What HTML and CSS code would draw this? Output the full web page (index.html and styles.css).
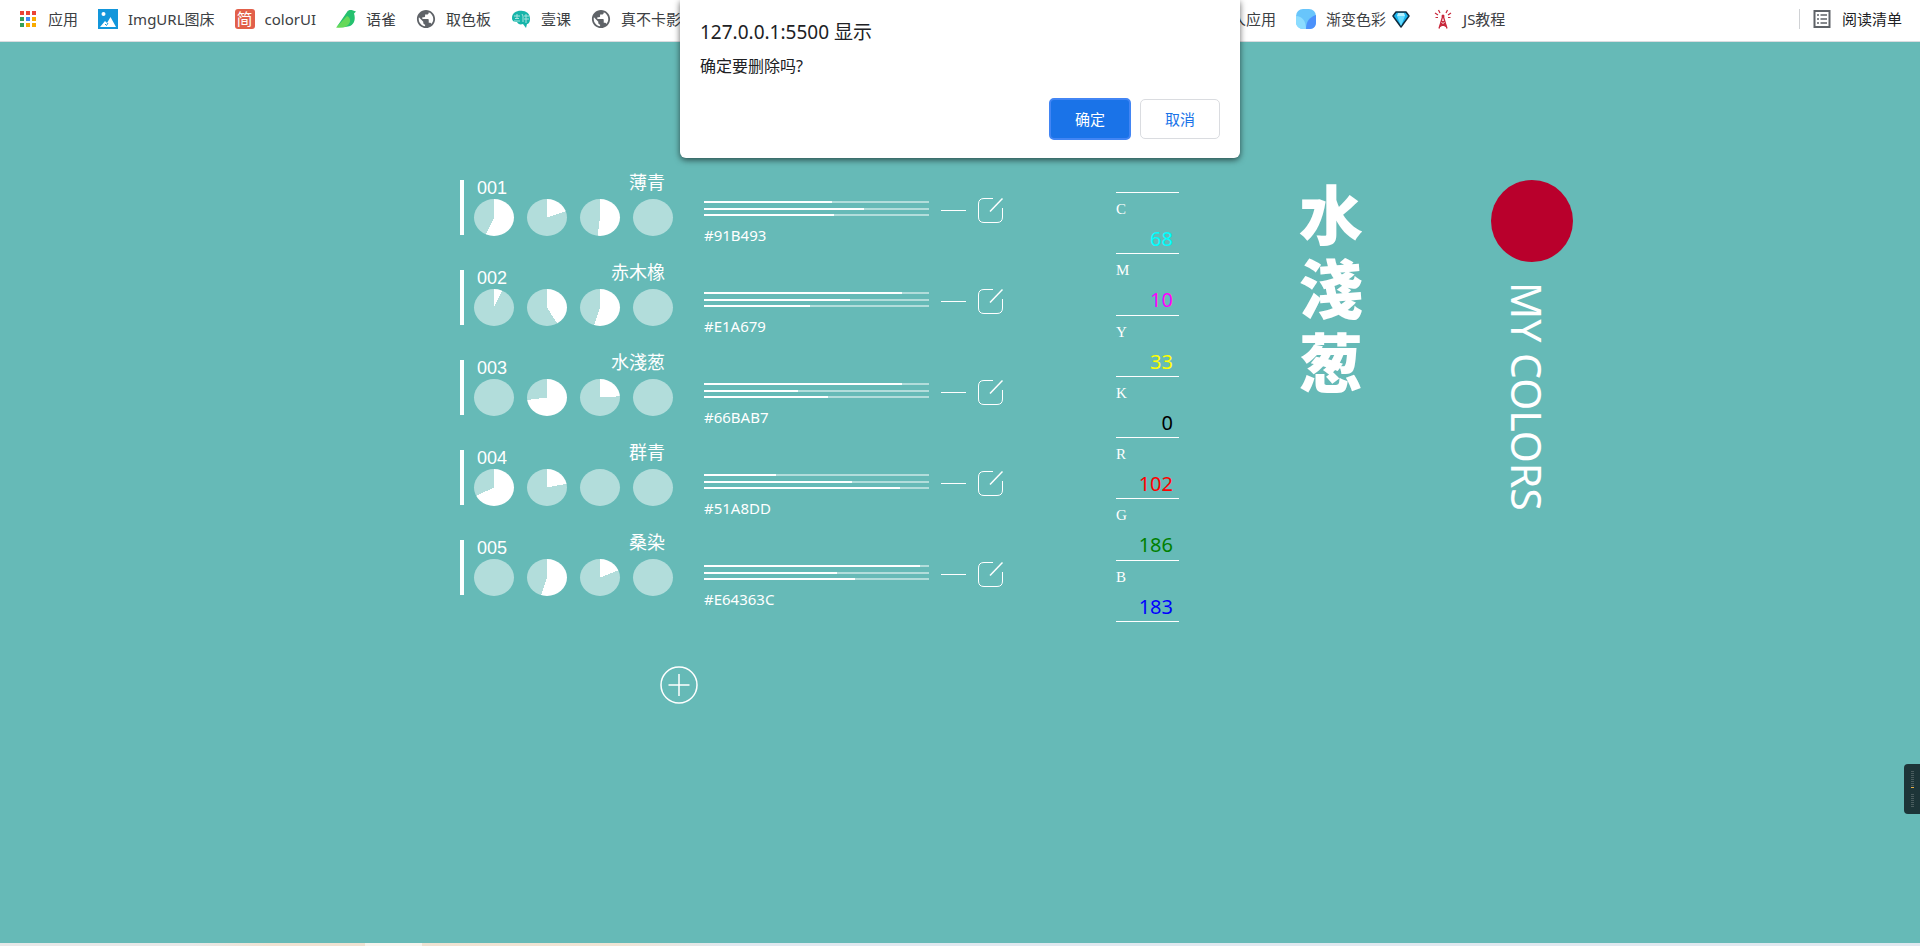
FILE: index.html
```html
<!DOCTYPE html>
<html lang="zh-CN">
<head>
<meta charset="utf-8">
<title>MY COLORS</title>
<link rel="stylesheet" href="styles.css">
</head>
<body>
<svg class="defs" aria-hidden="true">
  <symbol id="edit" viewBox="0 0 25 25"><path d="M15 .5H6Q.5.5.5 6v13Q.5 24.500 6 24.500h13Q24.500 24.500 24.500 19V10" fill="none" stroke="#fff"/><path d="M12 13.500 24.500.5" fill="none" stroke="#fff" stroke-width="1.500"/></symbol>
  <symbol id="globe" viewBox="1 1 22 22"><path d="M12 2C6.480 2 2 6.480 2 12s4.480 10 10 10 10-4.480 10-10S17.520 2 12 2zm-1 17.930c-3.950-.49-7-3.850-7-7.930 0-.62.08-1.210.21-1.790L9 15v1c0 1.100.9 2 2 2v1.930zm6.900-2.540c-.26-.81-1-1.390-1.900-1.390h-1v-3c0-.55-.45-1-1-1H8v-2h2c.55 0 1-.45 1-1V7h2c1.100 0 2-.9 2-2v-.41c2.930 1.190 5 4.060 5 7.410 0 2.080-.8 3.970-2.100 5.390z" fill="#5f6368"/></symbol>
</svg>

<header class="bookmarks">
  <nav class="group main-group">
    <a class="bookmark" href="#"><svg class="icon" viewBox="0 0 20 20"><path d="M2 2h4v4H2zM8 2h4v4H8zM14 2h4v4h-4z" fill="#ea4335"/><path d="M2 8h4v4H2zM2 14h4v4H2z" fill="#34a05a"/><path d="M8 8h4v4H8z" fill="#4285f4"/><path d="M14 8h4v4h-4zM8 14h4v4H8zM14 14h4v4h-4z" fill="#f9ab00"/></svg>应用</a>
    <a class="bookmark" href="#"><svg class="icon" viewBox="0 0 20 20"><path d="M0 0h20v20H0z" fill="#1296db"/><circle cx="5.500" cy="5" r="2" fill="#fff"/><path d="M2 18l5-6 2 2 3.500-6L18 18z" fill="#fff"/><path d="M7 15l1.500 1.500L10 14" fill="none" stroke="#1296db"/></svg>ImgURL图床</a>
    <a class="bookmark" href="#"><span class="jian">简</span>colorUI</a>
    <a class="bookmark" href="#"><svg class="icon" viewBox="0 0 20 20"><path d="M11 3c1-2 4-2.500 6-1.500l3 1-2 2c2 6 0 12-6 13-4 1-8 1-11 0z" fill="#25c16f"/><path d="M0 18.500 11 7c4 2 4 6 1 9-3 3-8 3-12 2.500z" fill="#66d95a"/></svg>语雀</a>
    <a class="bookmark" href="#"><svg class="icon"><use href="#globe"/></svg>取色板</a>
    <a class="bookmark" href="#"><svg class="icon" viewBox="0 0 20 20"><path d="M1 9C1 3 7 1 12 2c5 .5 7 4 7 8s-2 5-3 5l-1 4-3-4c-3 1-5 0-6-2-3 0-5-1-5-4z" fill="#17b5aa"/><path d="M3 7h6M4 9.500h4M3 12h6M6 5v5M11 5l1 2v6M13 7h5M15 5v9M13 10h5" fill="none" stroke="#a8e3de"/></svg>壹课</a>
    <a class="bookmark" href="#"><svg class="icon"><use href="#globe"/></svg>真不卡影视</a>
  </nav>
  <nav class="group">
    <a class="bookmark" href="#">人应用</a>
    <a class="bookmark" href="#"><svg class="icon" viewBox="0 0 20 20"><rect width="20" height="20" rx="7" fill="#68c5fb"/><path d="M0 7c6 0 10 5 10 13H7c-4 0-7-3-7-7z" fill="#8bdcff"/><path d="M20 6C14 8 10 12 10 20h4c4 0 6-3 6-7z" fill="#4b91fb"/></svg>渐变色彩<svg class="gem" viewBox="0 0 18 20"><path d="M4 3h10l3 4-8 11L1 7z" fill="#18b4ee" stroke="#102a3c" stroke-width="1.500" stroke-linejoin="round"/><path d="M5 7h8l-4 10z" fill="#66dcff"/><path d="M6 4h6l1 3H5z" fill="#b5f1ff"/></svg></a>
    <a class="bookmark" href="#"><svg class="icon" viewBox="0 0 20 20"><path d="M9.500 8 6 19.500M10.500 8 14 19.500M8.500 12l3.500 2.500-5 3M11.500 12 8 14.500l5 3" fill="none" stroke="#c8283c" stroke-width="1.300"/><circle cx="10" cy="7" r="1.500" fill="#c8283c"/><path d="M7 4 5.500 1M13 4l1.500-3M5 6 2 4M15 6l3-2M5 8.500H2.500M15 8.500h2.500" stroke="#c8283c" stroke-width="1.200"/></svg>JS教程</a>
  </nav>
  <a class="bookmark reading" href="#"><svg class="icon" viewBox="0 0 20 20"><path d="M2.500 2h15v16h-15z" fill="none" stroke="#5f6368" stroke-width="2"/><path d="M5 6h2M5 10h2M5 14h2M8.500 6H15M8.500 10H15M8.500 14H15" stroke="#5f6368" stroke-width="1.600"/></svg>阅读清单</a>
</header>

<main class="board">
  <section class="swatches">
    <ul class="list">
      <li class="swatch"><div class="body"><div class="head"><span class="num">001</span><span class="name">薄青</span></div><div class="pies"><i class="pie" style="--v:57%"></i><i class="pie" style="--v:20%"></i><i class="pie" style="--v:52%"></i><i class="pie" style="--v:0%"></i></div></div></li>
      <li class="swatch"><div class="body"><div class="head"><span class="num">002</span><span class="name">赤木橡</span></div><div class="pies"><i class="pie" style="--v:7%"></i><i class="pie" style="--v:41%"></i><i class="pie" style="--v:55%"></i><i class="pie" style="--v:0%"></i></div></div></li>
      <li class="swatch"><div class="body"><div class="head"><span class="num">003</span><span class="name">水淺葱</span></div><div class="pies"><i class="pie" style="--v:0%"></i><i class="pie" style="--v:73%"></i><i class="pie" style="--v:24%"></i><i class="pie" style="--v:0%"></i></div></div></li>
      <li class="swatch"><div class="body"><div class="head"><span class="num">004</span><span class="name">群青</span></div><div class="pies"><i class="pie" style="--v:68%"></i><i class="pie" style="--v:22%"></i><i class="pie" style="--v:0%"></i><i class="pie" style="--v:0%"></i></div></div></li>
      <li class="swatch"><div class="body"><div class="head"><span class="num">005</span><span class="name">桑染</span></div><div class="pies"><i class="pie" style="--v:0%"></i><i class="pie" style="--v:55%"></i><i class="pie" style="--v:19%"></i><i class="pie" style="--v:0%"></i></div></div></li>
    </ul>
    <button class="add" type="button" aria-label="添加"><svg viewBox="0 0 38 38"><circle cx="19" cy="19" r="18" fill="none" stroke="#fff" stroke-width="1.500"/><path d="M8.500 19h21M19 8v22" stroke="#fff" stroke-width="1.500"/></svg></button>
  </section>

  <ul class="channels">
    <li class="channel"><div class="bars"><i class="bar" style="--v:57%"></i><i class="bar" style="--v:71%"></i><i class="bar" style="--v:58%"></i></div><i class="dash"></i><button class="edit" type="button" aria-label="编辑"><svg><use href="#edit"/></svg></button><span class="hex">#91B493</span></li>
    <li class="channel"><div class="bars"><i class="bar" style="--v:88%"></i><i class="bar" style="--v:65%"></i><i class="bar" style="--v:47%"></i></div><i class="dash"></i><button class="edit" type="button" aria-label="编辑"><svg><use href="#edit"/></svg></button><span class="hex">#E1A679</span></li>
    <li class="channel"><div class="bars"><i class="bar" style="--v:88%"></i><i class="bar" style="--v:42%"></i><i class="bar" style="--v:55%"></i></div><i class="dash"></i><button class="edit" type="button" aria-label="编辑"><svg><use href="#edit"/></svg></button><span class="hex">#66BAB7</span></li>
    <li class="channel"><div class="bars"><i class="bar" style="--v:32%"></i><i class="bar" style="--v:66%"></i><i class="bar" style="--v:87%"></i></div><i class="dash"></i><button class="edit" type="button" aria-label="编辑"><svg><use href="#edit"/></svg></button><span class="hex">#51A8DD</span></li>
    <li class="channel"><div class="bars"><i class="bar" style="--v:96%"></i><i class="bar" style="--v:59%"></i><i class="bar" style="--v:67%"></i></div><i class="dash"></i><button class="edit" type="button" aria-label="编辑"><svg><use href="#edit"/></svg></button><span class="hex">#E64363C</span></li>
  </ul>

  <dl class="values">
    <div class="value"><dt>C</dt><dd class="c">68</dd></div>
    <div class="value"><dt>M</dt><dd class="m">10</dd></div>
    <div class="value"><dt>Y</dt><dd class="y">33</dd></div>
    <div class="value"><dt>K</dt><dd class="k">0</dd></div>
    <div class="value"><dt>R</dt><dd class="r">102</dd></div>
    <div class="value"><dt>G</dt><dd class="g">186</dd></div>
    <div class="value"><dt>B</dt><dd class="b">183</dd></div>
  </dl>

  <h1 class="title">水淺葱</h1>

  <aside class="brand"><div class="sun"></div><p class="brand-name">MY COLORS</p></aside>
</main>

<footer class="strip"></footer>

<div class="dialog" role="alertdialog" aria-labelledby="dlg-title" aria-describedby="dlg-text">
  <h2 class="dialog-title" id="dlg-title">127.0.0.1:5500 显示</h2>
  <p class="dialog-text" id="dlg-text">确定要删除吗?</p>
  <div class="actions"><button class="btn primary" type="button">确定</button><button class="btn" type="button">取消</button></div>
</div>

<div class="widget"><i class="dots"></i><i class="mark"></i><i class="dots short"></i></div>
</body>
</html>
```

FILE: styles.css
```css
* { box-sizing: border-box; }

body {
  margin: 0;
  min-height: 100vh;
  display: flex;
  flex-direction: column;
  position: relative;
  background: #66bab7;
  color: #fff;
  font-family: "Noto Sans", "Noto Sans CJK SC", sans-serif;
  font-size: 15px;
  line-height: 20px;
}

ul, dl, dd, p, h1, h2 { margin: 0; padding: 0; }
ul { list-style: none; }
button { font: inherit; padding: 0; cursor: pointer; }
.defs { position: absolute; width: 0; height: 0; }

/* Bookmarks bar */
.bookmarks {
  display: flex;
  align-items: center;
  height: 42px;
  padding: 0 18px;
  padding-bottom: 4px;
  background: #fff;
  border-bottom: 1px solid #dadce0;
}
.group { display: flex; gap: 20px; }
.main-group { flex: 0 1 1213px; }
.bookmark {
  display: flex;
  align-items: center;
  gap: 10px;
  color: #3c4043;
  text-decoration: none;
  white-space: nowrap;
}
.icon { width: 20px; height: 20px; flex: none; }
.gem { width: 18px; height: 20px; margin: 0 3px 0 -4px; }
.jian {
  width: 20px;
  height: 20px;
  border-radius: 3px;
  background: #e2604a;
  color: #fff;
  font-size: 16px;
  text-align: center;
}
.reading {
  margin-left: auto;
  padding-left: 12px;
  border-left: 1px solid #d0d2d5;
  color: #202124;
}

/* Board */
.board {
  flex: 1;
  display: grid;
  grid-template-columns: 244px 412px 181px 194px 82px;
  justify-content: center;
  align-items: start;
  padding: 130px 0 40px 113px;
}

.list { display: grid; gap: 26px; width: 213px; }
.swatch { display: flex; align-items: flex-end; gap: 10px; }
.swatch::before {
  content: "";
  width: 4px;
  height: 55px;
  margin-bottom: 1px;
  background: #fff;
}
.body { flex: 1; }
.head {
  display: flex;
  justify-content: space-between;
  height: 27px;
  padding: 0 8px 0 3px;
  font-size: 18px;
}
.num {
  align-self: flex-end;
  font-family: "Liberation Sans", Arial, sans-serif;
  line-height: 22px;
}
.name { font-family: "Noto Sans CJK JP", sans-serif; line-height: 18px; }
.pies { display: flex; justify-content: space-between; }
.pie {
  width: 40px;
  height: 37px;
  border-radius: 50%;
  background: conic-gradient(#fff var(--v), #b2dddb 0);
}
.add {
  display: block;
  width: 38px;
  height: 38px;
  margin: 70px 0 0 200px;
  border: 0;
  background: none;
}
.add svg { display: block; width: 38px; height: 38px; }

.channels { display: grid; gap: 44px; padding-top: 26px; }
.channel {
  display: grid;
  grid-template-columns: 225px 25px 25px;
  column-gap: 12px;
  row-gap: 2px;
}
.bars {
  display: flex;
  flex-direction: column;
  justify-content: space-between;
  height: 15px;
  margin-top: 3px;
}
.bar {
  height: 2px;
  background: linear-gradient(90deg, #fff var(--v), #b2dddb 0);
}
.dash { height: 1px; margin-top: 12px; background: #fff; }
.edit { height: 25px; border: 0; background: none; }
.edit svg { display: block; width: 25px; height: 25px; }
.hex { grid-column: 1 / -1; }

.values {
  display: grid;
  grid-template-rows: repeat(7, 1fr);
  width: 63px;
  min-height: 430px;
  margin-top: 20px;
  border-top: 1px solid #fff;
}
.value { padding: 6px 6px 0 0; border-bottom: 1px solid #fff; }
.value dt { font-family: "Liberation Serif", serif; }
.value dd { font-size: 20px; line-height: 28px; padding-top: 6px; text-align: right; }
.c { color: cyan; }
.m { color: magenta; }
.y { color: yellow; }
.k { color: black; }
.r { color: red; }
.g { color: green; }
.b { color: blue; }

.title {
  width: 68px;
  margin-top: 2px;
  font-family: "Noto Sans CJK JP", sans-serif;
  font-size: 64px;
  font-weight: 900;
  line-height: 74px;
  text-align: center;
  word-break: break-all;
}

.brand { display: grid; gap: 20px; padding-top: 8px; }
.sun { height: 82px; border-radius: 50%; background: #b9002c; }
.brand-name {
  justify-self: start;
  padding-left: 8px;
  writing-mode: vertical-rl;
  font-size: 41px;
  line-height: 56px;
  white-space: nowrap;
}

.strip {
  height: 3px;
  background: linear-gradient(90deg, #e8e8e8 10%, #f0e2d2 14%, #f0e2d2 19%, #f8f4ee 19%, #f8f4ee 22%, #f0e2d2 22%, #f0e4d4 32%, #e0e8ef 38%);
}

/* Confirm dialog */
.dialog {
  position: absolute;
  top: 0;
  left: 50%;
  width: 560px;
  margin-left: -280px;
  padding: 20px;
  padding-bottom: 18px;
  border-radius: 0 0 6px 6px;
  background: #fff;
  color: #202124;
  box-shadow: 0 2px 6px rgba(0, 0, 0, .6);
}
.dialog-title { font-size: 19px; font-weight: 400; line-height: 24px; }
.dialog-text { margin-top: 12px; font-size: 16px; }
.actions { display: flex; justify-content: flex-end; align-items: center; gap: 9px; margin-top: 22px; }
.btn {
  width: 80px;
  height: 40px;
  border: 1px solid #dadce0;
  border-radius: 5px;
  background: #fff;
  color: #1a73e8;
}
.primary {
  width: 82px;
  height: 42px;
  border: 2px solid #4285f4;
  background: #1a73e8;
  color: #fff;
}

/* Edge widget */
.widget {
  position: absolute;
  right: 0;
  top: 764px;
  display: flex;
  flex-direction: column;
  align-items: center;
  width: 16px;
  height: 50px;
  padding-top: 7px;
  border-radius: 4px 0 0 4px;
  background: #1d3538;
}
.dots { width: 3px; height: 15px; background: repeating-linear-gradient(#4a5c5e 0 1px, transparent 1px 2px); }
.mark { width: 3px; height: 1px; margin: 1px 0 6px; background: #e8b04a; }
.short { height: 13px; }
```
